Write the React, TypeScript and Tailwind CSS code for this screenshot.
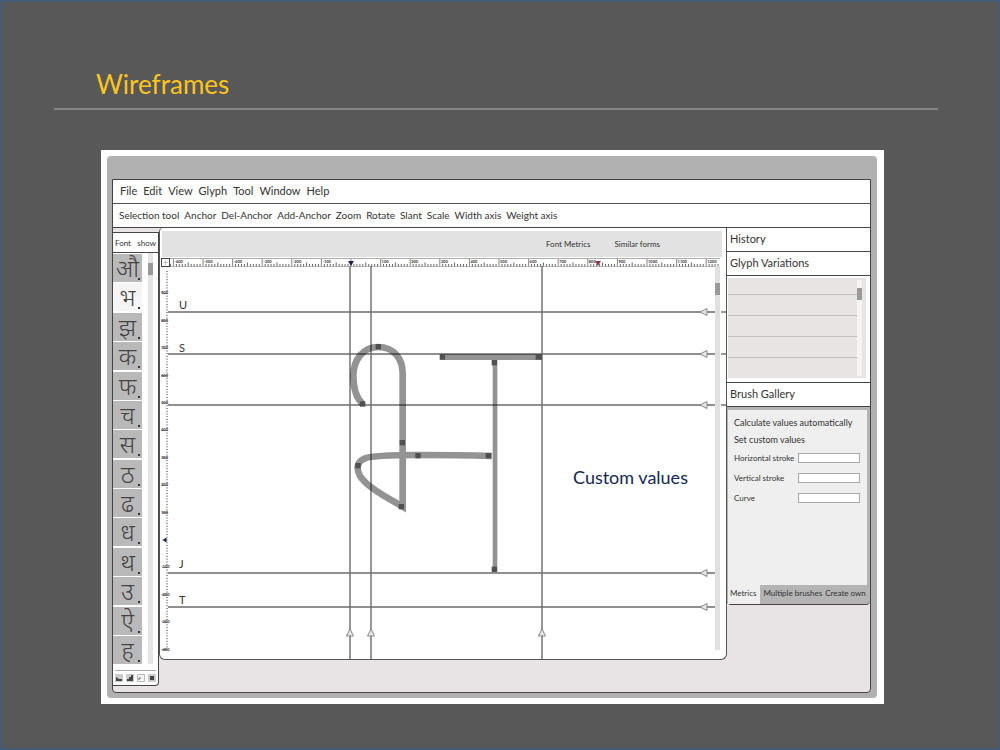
import React from 'react';

const menus = ['File', 'Edit', 'View', 'Glyph', 'Tool', 'Window', 'Help'];

const tools = [
  'Selection tool', 'Anchor', 'Del-Anchor', 'Add-Anchor', 'Zoom',
  'Rotate', 'Slant', 'Scale', 'Width axis', 'Weight axis',
];

const letters = ['औ', 'भ', 'झ', 'क', 'फ', 'च', 'स', 'ठ', 'ढ', 'ध', 'थ', 'उ', 'ऐ', 'ह'];

const strokes = ['Horizontal stroke', 'Vertical stroke', 'Curve'];

// guide lines: y position, name, and whether they run on past the scrollbar
const hGuides = [
  { y: 54, name: 'U', textY: 51, full: true },
  { y: 96, name: 'S', textY: 94, full: true },
  { y: 147, name: '', textY: 0, full: true },
  { y: 315, name: 'J', textY: 310, full: false },
  { y: 349, name: 'T', textY: 346, full: false },
];
const vGuides = [190, 211, 382];

const handles = [
  [98, 252], [145, 80], [217, 368], [264, 407], [475, 407], [84, 437],
  [214, 560], [337, 111], [625, 111], [493, 128], [493, 748],
];

const Rulers: React.FC = () => {
  const xTicks = Array.from({ length: 186 }, (_, i) => i - 61);
  const yTicks = Array.from({ length: 139 }, (_, i) => i - 98);
  return (
    <g>
      <path d="M3 0.5H560" stroke="#aaa" />
      <path d="M10 8.5H560" stroke="#999" strokeWidth="0.6" />
      {xTicks.map((n) => {
        const x = 191 + n * 2.96;
        if (x > 560) return null;
        return (
          <path key={n} d={`M${x} 8.5V${n % 10 === 0 ? 1 : n % 5 === 0 ? 4.5 : 6}`} stroke="#555" strokeWidth={n % 10 === 0 ? 0.7 : 0.9} />
        );
      })}
      {Array.from({ length: 19 }, (_, i) => i - 6).map((n) =>
        n === 0 ? null : (
          <text key={n} x={192 + n * 29.6} y="4.5" fontSize="4" fontWeight="700" fill="#333">{n * 100}</text>
        )
      )}
      {yTicks.map((n) => {
        const y = 282 + n * 2.74;
        return (
          <path key={n} d={`M${n % 10 === 0 ? 2 : 6} ${y}H8`} stroke="#777" strokeWidth="0.8" />
        );
      })}
      {Array.from({ length: 14 }, (_, i) => 9 - i).map((n) =>
        n === 0 ? null : (
          <text key={n} x="1" y={283 - n * 27.4} fontSize="4" fontWeight="700" fill="#333">{n * 100}</text>
        )
      )}
      <rect x="1.5" y="0.5" width="8" height="8" fill="#fff" stroke="#444" />
      <path d="M3.5 4.5H8M5.5 2.5V7" stroke="#aaa" strokeWidth="0.7" />
      <path d="M188 3H194L191 8Z" fill="#1d2352" />
      <path d="M435 3H441L438 8Z" fill="#8c3b45" />
      <path d="M3.5 282L6 280V284Z" fill="#1d2352" stroke="#1d2352" />
    </g>
  );
};

const GlyphCanvas: React.FC = () => (
  <svg className="block w-full h-auto" viewBox="0 0 566 401" fill="none">
    <Rulers />
    {hGuides.map((g) => (
      <g key={g.y}>
        <path d={`M8 ${g.y}H556`} stroke="#6b6b6b" strokeWidth="1.4" />
        {g.full && <path d={`M561 ${g.y}H566`} stroke="#6b6b6b" strokeWidth="1.4" />}
        <path d={`M540 ${g.y}L547 ${g.y - 3.5}V${g.y + 3.5}Z`} fill="#e8e8e8" stroke="#888" />
        {g.name && <text x="19" y={g.textY} fontSize="11" fill="#333">{g.name}</text>}
      </g>
    ))}
    {vGuides.map((x) => (
      <g key={x}>
        <path d={`M${x} 8V401`} stroke="#6b6b6b" strokeWidth="1.4" />
        <path d={`M${x} 371L${x + 3.5} 378H${x - 3.5}Z`} fill="#e8e8e8" stroke="#888" />
      </g>
    ))}
    <rect x="555" y="8" width="5" height="384" fill="#e0e0e0" />
    <rect x="555" y="25" width="5" height="12" fill="#999" />

    {/* the letter being edited */}
    <svg x="170" y="62" width="240" height="270" viewBox="0 0 720 810">
      <g stroke="#000" opacity="0.42">
        <path d="M98 252C80 235 70 210 70 168C70 118 100 81 145 81C190 81 218 115 218 160V560C165 530 110 500 90 468C78 445 80 425 105 415C130 405 200 405 264 405C330 405 420 406 486 408" strokeWidth="20" />
        <path d="M330 111H636" strokeWidth="18" />
        <path d="M495 120V756" strokeWidth="14" />
      </g>
      {handles.map(([x, y]) => (
        <rect key={`${x}-${y}`} x={x - 8} y={y - 8} width="16" height="16" fill="#505050" />
      ))}
    </svg>
    <text x="413" y="226" fontSize="18" fill="#14284f">Custom values</text>
  </svg>
);

const FontList: React.FC = () => (
  <aside className="w-[46px] shrink-0 mt-1 mb-1.5 flex flex-col bg-white border-t border-r border-b border-[#444] rounded-br-sm">
    <div className="h-5 px-0.5 flex items-center justify-between border-b border-[#444] text-[8px]">
      <button type="button">Font</button>
      <button type="button">show</button>
    </div>
    <div className="flex grow">
      <div className="grow min-h-[411px] flex flex-col justify-between pt-px">
        {letters.map((l) => (
          <button
            key={l}
            type="button"
            className={`relative h-7 w-[29px] flex items-center justify-center font-light text-[24px] leading-7 text-[#444] ${l === 'भ' ? 'bg-[#f5f5f5]' : 'bg-[#b9b9b9]'}`}
          >
            <span>{l}</span>
            <span className="absolute right-0.5 bottom-0.5 size-0.5 bg-[#333]" />
          </button>
        ))}
      </div>
      <div className="w-[5px] mr-[5px] bg-[#e4e4e4]">
        <div className="mt-2.5 h-3 bg-[#999]" />
      </div>
    </div>
    <div className="mt-1.5 mx-0.5 h-[15px] flex items-center justify-between border-t border-[#aaa]">
      <svg className="size-2" viewBox="0 0 8 8"><path d="M0 0H8V8H0Z" fill="#ccc" /><path d="M1 3L4 5H7V7H1Z" fill="#444" /></svg>
      <svg className="size-2" viewBox="0 0 8 8"><path d="M0 0H8V8H0Z" fill="#ccc" /><path d="M1 5H3V3H5V1H7V7H1Z" fill="#444" /></svg>
      <svg className="size-2" viewBox="0 0 8 8"><path d="M.5 .5H7.5V7.5H.5Z" fill="#f4f4f4" stroke="#bbb" /><path d="M2 6V4H4" stroke="#666" fill="none" /></svg>
      <svg className="size-2" viewBox="0 0 8 8"><path d="M0 0H8V8H0Z" fill="#ccc" /><path d="M2 2H6V6H2Z" fill="#444" /></svg>
    </div>
  </aside>
);

const SidePanels: React.FC = () => (
  <aside className="w-[143px] shrink-0 self-start bg-white">
    <h2 className="h-6 pl-[3px] flex items-center text-[11px] border-b border-[#444]">History</h2>
    <h2 className="h-6 pl-[3px] flex items-center text-[11px] border-b border-[#444]">Glyph Variations</h2>
    <div className="h-[107px] pt-0.5 pb-1 pl-px pr-1 border-b border-[#444]">
      <div className="h-full flex bg-[#e8e4e3]">
        <div className="grow pt-4 flex flex-col gap-5">
          <hr className="border-[#c4c0bf]" />
          <hr className="border-[#c4c0bf]" />
          <hr className="border-[#c4c0bf]" />
          <hr className="border-[#c4c0bf]" />
        </div>
        <div className="w-[5px] my-0.5 mr-1 bg-[#f8f3f4]">
          <div className="mt-2 h-3 bg-[#999]" />
        </div>
      </div>
    </div>
    <h2 className="h-6 pl-[3px] flex items-center text-[11px] border-b border-[#444]">Brush Gallery</h2>
    <div className="pt-[3px] pl-px pr-[3px] bg-[#b4b4b4] border-b border-[#444] rounded-b-sm">
      <div className="h-[175px] pt-1 pl-1.5 pr-[7px] bg-[#efefef] text-[9px]">
        <button type="button" className="block h-[17px]">Calculate values automatically</button>
        <button type="button" className="block h-[17px]">Set custom values</button>
        <div className="pt-1 flex flex-col gap-2 text-[8px]">
          {strokes.map((s) => (
            <label key={s} className="h-3 flex items-center justify-between whitespace-nowrap">
              {s}
              <input type="text" className="w-[62px] h-2.5 bg-white border border-[#aaa]" />
            </label>
          ))}
        </div>
      </div>
      <div className="h-[19px] flex text-[8px] leading-3 whitespace-nowrap">
        <button type="button" className="pl-0.5 pr-1 pb-1 bg-[#efefef]">Metrics</button>
        <button type="button" className="pl-[3px] pb-1">Multiple brushes</button>
        <button type="button" className="pl-[3px] pb-1">Create own</button>
      </div>
    </div>
  </aside>
);

const App: React.FC = () => {
  return (
    <main className="min-h-screen bg-[#585858] border-2 border-[#435b78] font-['Lato','Noto_Sans',sans-serif] text-[#333]">
      <header className="ml-[52px] mr-[60px] pt-[66px] pb-2 pl-[42px] border-b-2 border-[#858585]">
        <h1 className="text-[26px] leading-8 text-[#fdc51c]">Wireframes</h1>
      </header>

      <section className="mt-10 mb-11 ml-[99px] mr-[114px] pt-1.5 pb-1.5 pl-1.5 pr-[7px] bg-white">
        <div className="pt-[23px] pb-[5px] pl-[5px] pr-1.5 bg-[#b1b1b1] rounded-sm">
          <div className="bg-[#e8e4e5] border border-[#444] rounded-b">
            <nav className="h-6 pl-[7px] flex items-center gap-1.5 bg-white border-b border-[#555] text-[11px]">
              {menus.map((m) => (
                <button key={m} type="button">{m}</button>
              ))}
            </nav>
            <div className="h-6 pl-1.5 flex items-center gap-[5px] bg-white border-b border-[#444] text-[10px] whitespace-nowrap">
              {tools.map((t) => (
                <button key={t} type="button">{t}</button>
              ))}
            </div>
            <div className="flex">
              <FontList />
              <div className="grow min-w-0 self-start pt-[3px] bg-white border-x border-b border-[#555] rounded-b-md rounded-tl-sm">
                <div className="h-[26px] mb-px ml-0.5 mr-1 pr-[62px] flex items-center justify-end gap-6 bg-[#e2e2e2] text-[8px]">
                  <button type="button">Font Metrics</button>
                  <button type="button">Similar forms</button>
                </div>
                <GlyphCanvas />
              </div>
              <SidePanels />
            </div>
          </div>
        </div>
      </section>
    </main>
  );
};

export default App;
